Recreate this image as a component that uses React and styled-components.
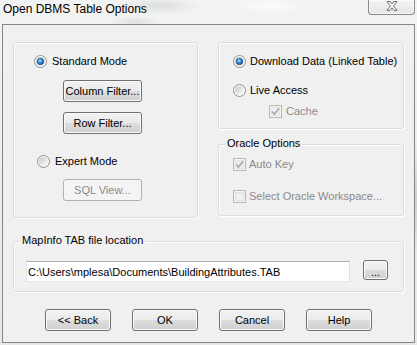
import React, { useId } from "react";
import styled, { createGlobalStyle } from "styled-components";

const GlobalStyle = createGlobalStyle`
  html, body { margin: 0; padding: 0; }
  body {
    width: 417px; height: 345px; overflow: hidden;
    background: #e9eaea;
    font-family: "Liberation Sans", Arial, sans-serif;
  }
`;

const Frame = styled.div`
  width: 417px;
  height: 345px;
  box-sizing: border-box;
  display: flex;
  flex-direction: column;
  background:
    radial-gradient(ellipse 60px 12px at 160px 6px, rgba(110, 110, 110, 0.16), transparent 70%),
    radial-gradient(ellipse 40px 8px at 135px 22px, rgba(110, 110, 110, 0.14), transparent 70%),
    radial-gradient(ellipse 50px 10px at 270px 6px, rgba(255, 255, 255, 0.8), transparent 70%),
    radial-gradient(ellipse 6px 80px at 416px 200px, rgba(110, 110, 110, 0.25), transparent 70%),
    linear-gradient(180deg, #f2f3f3 0%, #e7e8e8 100%);
`;

const TitleBar = styled.div`
  height: 24px;
  display: flex;
  justify-content: space-between;
  align-items: flex-start;
`;

const Title = styled.div`
  margin: 2px 0 0 3px;
  font: 12px/14px "Liberation Sans", Arial, sans-serif;
  color: #000;
`;

const CloseButton = styled.div`
  box-sizing: border-box;
  width: 47px;
  height: 15px;
  margin-right: 2px;
  border: 1px solid #8a8a8a;
  border-top: none;
  border-radius: 0 0 4px 4px;
  background: linear-gradient(180deg, #f3f3f3 0%, #e6e6e6 100%);
  box-shadow: inset 0 0 0 1px rgba(255, 255, 255, 0.7);
  display: flex;
  align-items: center;
  justify-content: center;
  padding-bottom: 2px;
`;

const Client = styled.div`
  box-sizing: border-box;
  height: 319px;
  margin: 0 2px 2px;
  border: 1px solid #858585;
  background: #f0f0f0;
  padding: 17px 10px 0 10px;
  display: flex;
  flex-direction: column;
`;

const TopRow = styled.div`
  display: flex;
  gap: 20px;
  height: 176px;
`;

const Column = styled.div`
  display: flex;
  flex-direction: column;
`;

const Group = styled.div`
  position: relative;
  box-sizing: border-box;
  width: ${(p) => p.$w}px;
  height: ${(p) => p.$h}px;
  margin-top: ${(p) => p.$mt || 0}px;
  border: 1px solid #d5dfe5;
  border-radius: 3px;
  box-shadow: inset 1px 1px 0 #ffffff, 1px 1px 0 #ffffff;
  display: flex;
  flex-direction: column;
  align-items: flex-start;
`;

const Legend = styled.span`
  position: absolute;
  top: -8px;
  left: 6px;
  padding: 0 2px;
  background: #f0f0f0;
  font-size: 11px;
  line-height: 13px;
  color: #000;
  white-space: nowrap;
`;

const Item = styled.div`
  display: flex;
  align-items: center;
  gap: ${(p) => (p.$gap ?? 5)}px;
  height: 13px;
  margin-top: ${(p) => p.$top}px;
  margin-left: ${(p) => p.$left}px;
  font-size: 11px;
  line-height: 13px;
  color: ${(p) => (p.$disabled ? "#8a8a8a" : "#000")};
  white-space: nowrap;
  svg { flex: none; }
`;

const Button = styled.button`
  box-sizing: border-box;
  flex: none;
  width: ${(p) => p.$w}px;
  height: ${(p) => p.$h ?? 22}px;
  margin: ${(p) => p.$top ?? 0}px 0 0 ${(p) => p.$left ?? 0}px;
  padding: 0;
  border: 1px solid #707070;
  border-radius: 3px;
  background: linear-gradient(180deg, #f2f2f2 0%, #ebebeb 48%, #dddddd 52%, #cfcfcf 100%);
  box-shadow: inset 0 0 0 1px #fbfbfb;
  font: 11px/13px "Liberation Sans", Arial, sans-serif;
  color: #000;
  display: flex;
  align-items: center;
  justify-content: center;
  white-space: nowrap;

  &:disabled {
    border-color: #adb2b5;
    background: #f4f4f4;
    box-shadow: none;
    color: #8a8a8a;
  }
`;

const PathRow = styled.div`
  display: flex;
  align-items: flex-start;
  margin: 19px 0 0 12px;
  gap: 13px;
`;

const PathInput = styled.input`
  box-sizing: border-box;
  width: 324px;
  height: 21px;
  margin: 0;
  padding: 0 0 0 1px;
  border: 1px solid;
  border-color: #abadb3 #dbdfe6 #e3e9ef #e2e3ea;
  background: #fff;
  font: 11px/13px "Liberation Sans", Arial, sans-serif;
  color: #000;
  outline: none;
`;

const ButtonRow = styled.div`
  display: flex;
  gap: 21px;
  margin-top: 17px;
  padding-left: 32px;
`;

const Dots = styled.span`
  padding-top: 4px;
  letter-spacing: 0;
`;

function RadioIcon({ checked }) {
  const id = useId().replace(/:/g, "");
  return (
    <svg width="13" height="13" viewBox="0 0 13 13">
      <defs>
        <linearGradient id={`rb${id}`} x1="0" y1="0" x2="1" y2="1">
          <stop offset="0" stopColor="#c4c6c8" />
          <stop offset="1" stopColor="#ffffff" />
        </linearGradient>
        <radialGradient id={`rd${id}`} cx="0.42" cy="0.38" r="0.7">
          <stop offset="0" stopColor="#b4e6ff" />
          <stop offset="0.4" stopColor="#3a94dc" />
          <stop offset="1" stopColor="#0f3f7a" />
        </radialGradient>
      </defs>
      <circle cx="6.5" cy="6.5" r="6" fill="#f9f9f9" stroke="#8e9193" strokeWidth="1" />
      <circle cx="6.5" cy="6.5" r="4.6" fill={`url(#rb${id})`} />
      {checked && (
        <circle cx="6.5" cy="6.5" r="3.3" fill={`url(#rd${id})`} stroke="#1b4a80" strokeWidth="0.6" />
      )}
    </svg>
  );
}

function CheckIcon({ checked }) {
  return (
    <svg width="13" height="13" viewBox="0 0 13 13">
      <rect x="0.5" y="0.5" width="12" height="12" fill="#f4f4f4" stroke="#b8b8b8" />
      <rect x="2.5" y="2.5" width="8" height="8" fill="#efefef" stroke="#e2e2e2" />
      {checked && (
        <path d="M3.2 6.6 L5.4 9.2 L9.9 3.2" fill="none" stroke="#a8a8a8" strokeWidth="1.6" />
      )}
    </svg>
  );
}

function CloseGlyph() {
  return (
    <svg width="12" height="10" viewBox="0 0 12 10">
      <path
        d="M1 0.5 L4 0.5 L6 3 L8 0.5 L11 0.5 L7.6 4.8 L11 9.3 L8 9.3 L6 6.7 L4 9.3 L1 9.3 L4.4 4.8 Z"
        fill="#ffffff"
        stroke="#5a5a5a"
        strokeWidth="0.9"
        strokeLinejoin="round"
      />
    </svg>
  );
}

export default function App() {
  return (
    <>
      <GlobalStyle />
      <Frame>
        <TitleBar>
          <Title>Open DBMS Table Options</Title>
          <CloseButton>
            <CloseGlyph />
          </CloseButton>
        </TitleBar>
        <Client>
          <TopRow>
            <Group $w={185} $h={176}>
              <Item $top={12} $left={20}>
                <RadioIcon checked />
                <span>Standard Mode</span>
              </Item>
              <Button $w={79} $top={12} $left={49}>Column Filter...</Button>
              <Button $w={79} $top={10} $left={49}>Row Filter...</Button>
              <Item $top={21} $left={23}>
                <RadioIcon />
                <span>Expert Mode</span>
              </Item>
              <Button $w={79} $top={11} $left={49} disabled>SQL View...</Button>
            </Group>
            <Column>
              <Group $w={186} $h={87}>
                <Item $top={12} $left={14} $gap={4}>
                  <RadioIcon checked />
                  <span>Download Data (Linked Table)</span>
                </Item>
                <Item $top={16} $left={14} $gap={4}>
                  <RadioIcon />
                  <span>Live Access</span>
                </Item>
                <Item $top={8} $left={50} $gap={4} $disabled>
                  <CheckIcon checked />
                  <span>Cache</span>
                </Item>
              </Group>
              <Group $w={186} $h={72} $mt={15}>
                <Legend>Oracle Options</Legend>
                <Item $top={13} $left={14} $gap={3} $disabled>
                  <CheckIcon checked />
                  <span>Auto Key</span>
                </Item>
                <Item $top={19} $left={14} $gap={3} $disabled>
                  <CheckIcon />
                  <span>Select Oracle Workspace...</span>
                </Item>
              </Group>
            </Column>
          </TopRow>
          <Group $w={391} $h={51} $mt={23}>
            <Legend>MapInfo TAB file location</Legend>
            <PathRow>
              <PathInput readOnly defaultValue="C:\Users\mplesa\Documents\BuildingAttributes.TAB" />
              <Button $w={25} $h={20} $top={-1}>
                <Dots>...</Dots>
              </Button>
            </PathRow>
          </Group>
          <ButtonRow>
            <Button $w={66}>&lt;&lt; Back</Button>
            <Button $w={66}>OK</Button>
            <Button $w={66}>Cancel</Button>
            <Button $w={66}>Help</Button>
          </ButtonRow>
        </Client>
      </Frame>
    </>
  );
}
